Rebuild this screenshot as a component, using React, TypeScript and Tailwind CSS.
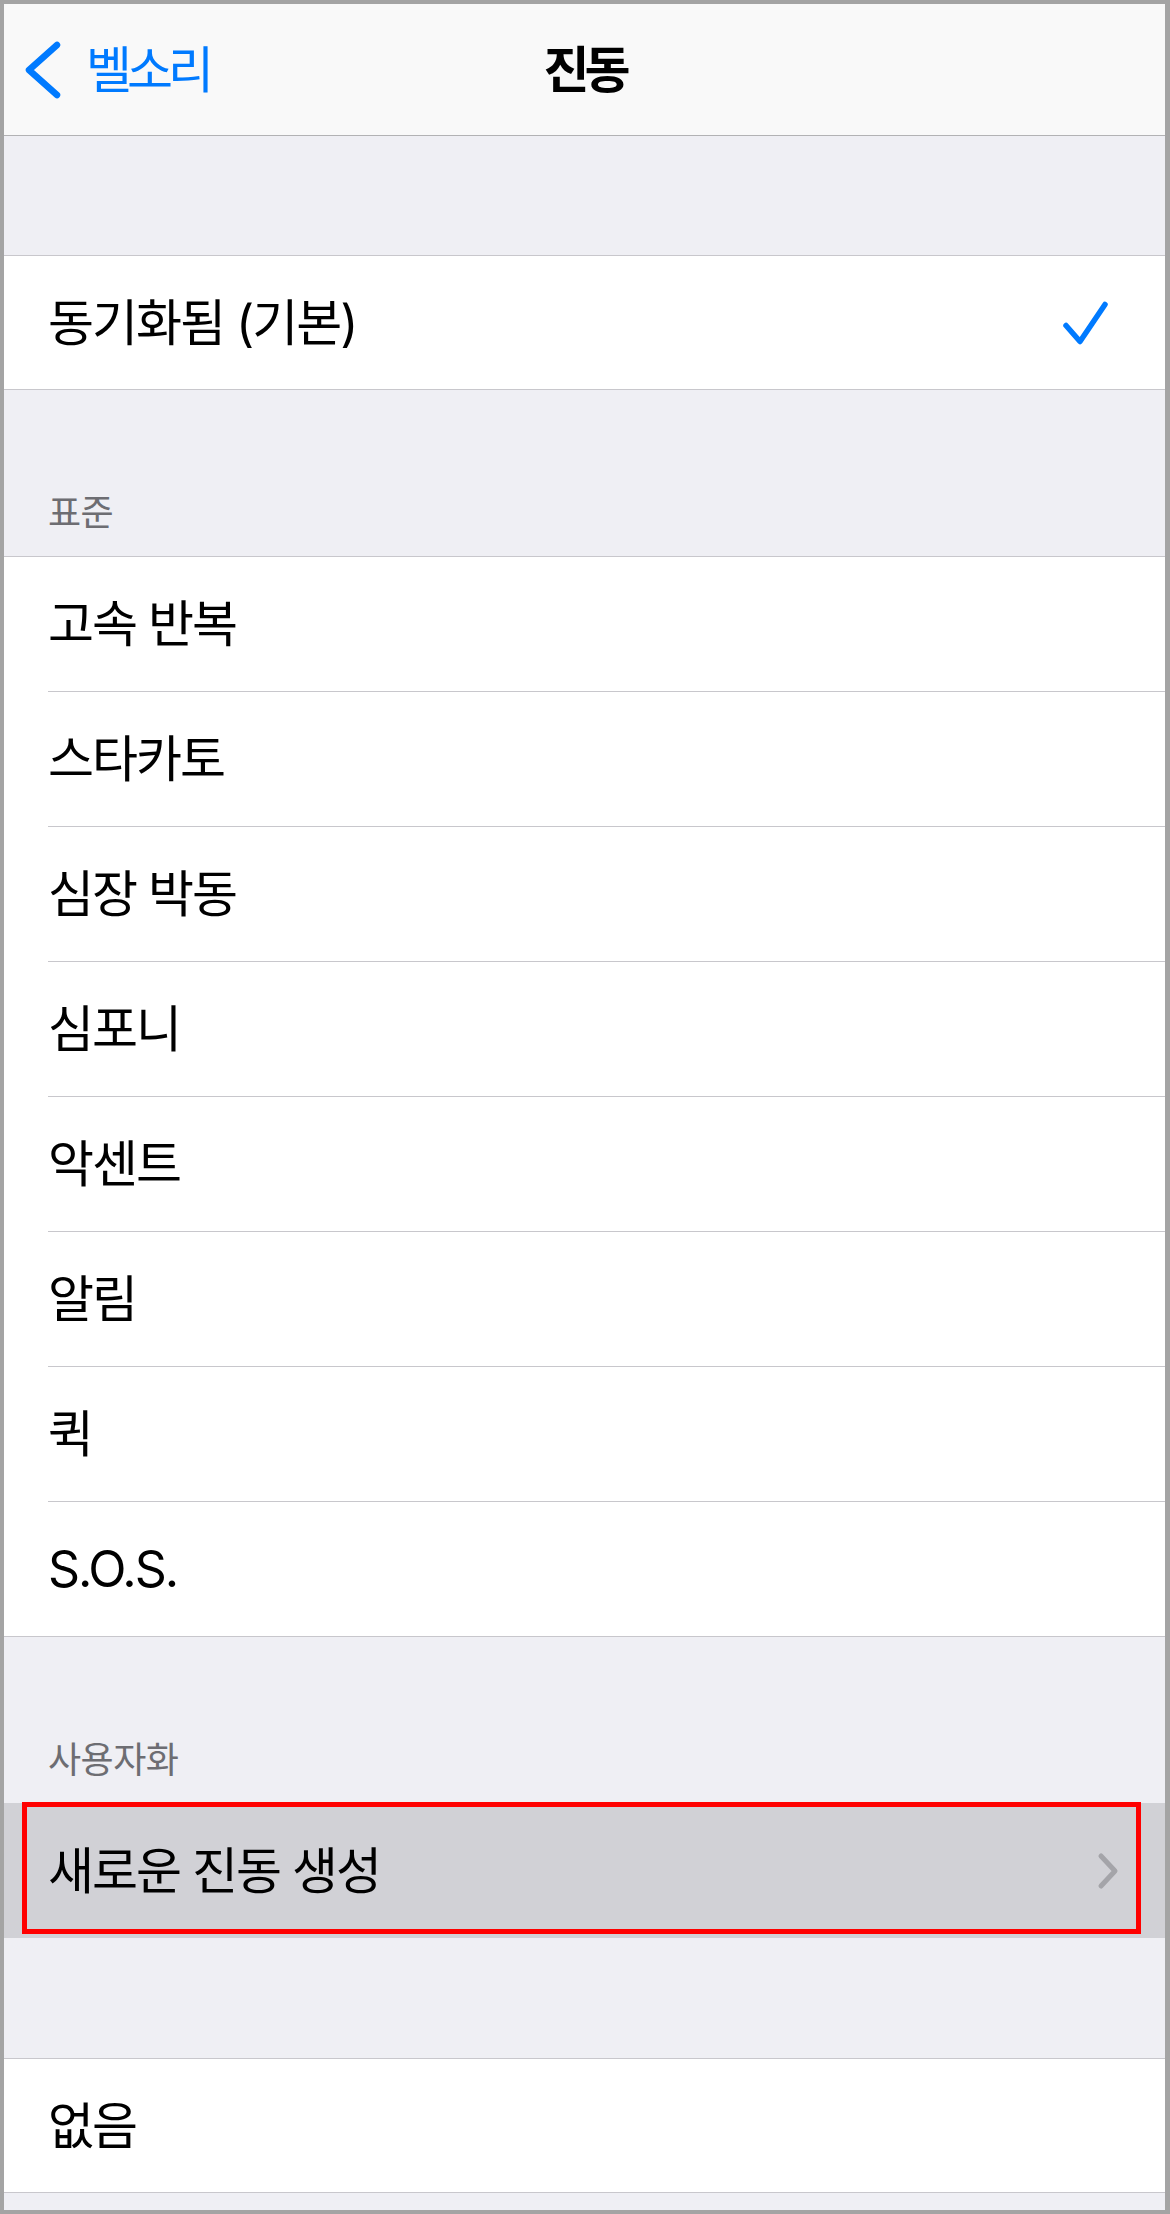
import React from "react";

const FONT = "font-['Inter','Noto_Sans_CJK_KR',sans-serif]";

const standardItems = ["고속 반복", "스타카토", "심장 박동", "심포니", "악센트", "알림", "퀵", "S.O.S."];

function NavBar() {
  return (
    <div className="grid h-[132px] grid-cols-[1fr_auto_1fr] items-center border-b border-[#b2b2b4] bg-[#f9f9f9]">
      <div className="flex items-center">
        <svg className="ml-[20px]" width="38" height="60" viewBox="0 0 38 60" fill="none">
          <path d="M33 5 L5 30 L33 55" stroke="#007aff" strokeWidth="6.5" strokeLinecap="round" strokeLinejoin="round" />
        </svg>
        <span className="ml-[24px] text-[50px] leading-none tracking-[-5px] text-[#007aff]">벨소리</span>
      </div>
      <h1 className="text-[50px] font-bold leading-none tracking-[-5px] text-black">진동</h1>
      <div />
    </div>
  );
}

function SectionHeader({ label }: { label: string }) {
  return (
    <div className="flex h-[166px] items-end pb-[25px] pl-[44px]">
      <span className="text-[36px] leading-none tracking-[-0.5px] text-[#6d6d72]">{label}</span>
    </div>
  );
}

function Row({ label, last }: { label: string; last?: boolean }) {
  return (
    <div className="bg-white">
      <div className="flex h-[134px] items-center pl-[44px]">
        <span className="text-[50px] leading-none tracking-[-2px] text-black">{label}</span>
      </div>
      <div className={last ? "h-px bg-[#c8c7cc]" : "ml-[44px] h-px bg-[#c8c7cc]"} />
    </div>
  );
}

export default function App() {
  return (
    <div className={`${FONT} h-[2214px] w-[1170px] overflow-hidden border-b-4 border-l-4 border-r-[5px] border-t-4 border-[#a4a4a4] bg-[#efeff4]`}>
      <NavBar />

      <div className="h-[119px]" />

      <div className="flex h-[135px] items-center justify-between border-y border-[#c8c7cc] bg-white pl-[44px] pr-[56px]">
        <span className="text-[50px] leading-none tracking-[-2px] text-black">동기화됨 (기본)</span>
        <svg width="46" height="46" viewBox="0 0 46 46" fill="none">
          <path d="M3 25.5 L17 41.5 L42 4.5" stroke="#007aff" strokeWidth="5.5" strokeLinecap="round" strokeLinejoin="round" />
        </svg>
      </div>

      <SectionHeader label="표준" />

      <div className="border-t border-[#c8c7cc]">
        {standardItems.map((item, i) => (
          <Row key={item} label={item} last={i === standardItems.length - 1} />
        ))}
      </div>

      <SectionHeader label="사용자화" />

      <div className="relative flex h-[135px] items-center justify-between bg-[#d1d1d6] pl-[44px] pr-[45px]">
        <span className="text-[50px] leading-none tracking-[-2px] text-black">새로운 진동 생성</span>
        <svg width="24" height="40" viewBox="0 0 24 40" fill="none">
          <path d="M5 5 L19 20 L5 35" stroke="#a4a4a9" strokeWidth="5" strokeLinecap="round" strokeLinejoin="round" />
        </svg>
        <div className="absolute bottom-[4px] left-[18px] right-[24px] top-[-1px] border-[5px] border-[#ff0000]" />
      </div>

      <div className="h-[120px]" />

      <div className="flex h-[135px] items-center border-y border-[#c8c7cc] bg-white pl-[44px]">
        <span className="text-[50px] leading-none tracking-[-2px] text-black">없음</span>
      </div>
    </div>
  );
}
